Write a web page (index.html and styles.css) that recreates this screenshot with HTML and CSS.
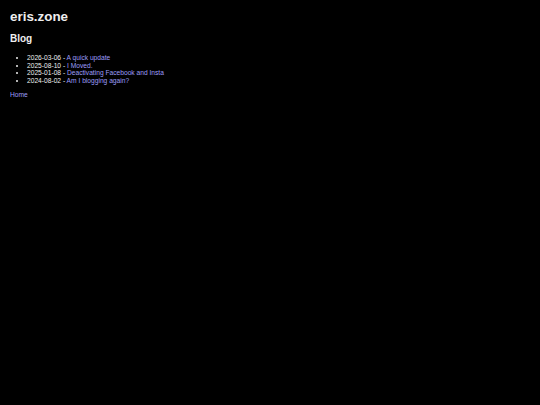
FILE: index.html
```html
<!DOCTYPE html>
<html>
<head>
<meta charset="utf-8">
<title>eris.zone</title>
<link rel="stylesheet" href="styles.css">
</head>
<body>
<h1 class="site-title">eris.zone</h1>
<h2 class="section-title">Blog</h2>
<ul class="posts">
<li>2026-03-06 - <a href="#">A quick update</a></li>
<li>2025-08-10 - <a href="#">I Moved.</a></li>
<li>2025-01-08 - <a href="#">Deactivating Facebook and Insta</a></li>
<li>2024-08-02 - <a href="#">Am I blogging again?</a></li>
</ul>
<p class="footer"><a href="#">Home</a></p>
</body>
</html>
```
FILE: styles.css
```css
html {
  background: #000;
}
body {
  margin: 0 10px;
  padding-top: 1px;
  background: #000;
  color: #eeeeee;
  font-family: "Liberation Sans", Arial, sans-serif;
  font-size: 6.67px;
}
a {
  color: #9d9dfa;
  text-decoration: none;
}
.site-title {
  font-size: 13.4px;
  line-height: 15px;
  margin: 8px 0 9px;
}
.section-title {
  font-size: 10px;
  line-height: 12px;
  margin: 9px 0 9px;
}
.posts {
  margin: 7px 0;
  padding-left: 17px;
  line-height: 7.6px;
}
.footer {
  margin: 7px 0;
  line-height: 7.6px;
}
```
